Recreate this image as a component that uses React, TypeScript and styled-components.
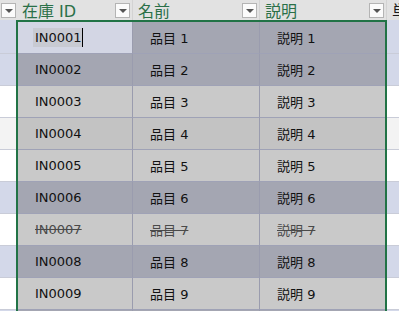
import styled, { createGlobalStyle, css } from "styled-components";

const GlobalStyle = createGlobalStyle`
  html, body {
    margin: 0;
    padding: 0;
    background: #ffffff;
    overflow: hidden;
  }
  body {
    font-family: "DejaVu Sans", "Noto Sans CJK JP", sans-serif;
  }
`;

const Sheet = styled.div`
  width: 420px;
  display: flex;
  flex-direction: column;
`;

const HeaderRow = styled.div`
  display: grid;
  grid-template-columns: 17px 116px 127px 127px 1fr;
  height: 20px;
  background: #e2e2e2;
`;

const HeaderCell = styled.div<{ $selected?: boolean }>`
  box-sizing: border-box;
  display: flex;
  align-items: center;
  justify-content: space-between;
  padding: 0 2px 0 5px;
  border-right: 1px solid #d3d3d3;
  font-size: 16px;
  color: ${(p) => (p.$selected ? "#2a7048" : "#1a1a1a")};
  white-space: nowrap;
  overflow: hidden;
`;

const GutterHead = styled(HeaderCell)`
  justify-content: flex-end;
  padding: 0 1px 0 0;
  border-right: none;
`;

const Dropdown = styled.span`
  box-sizing: border-box;
  flex: none;
  width: 15px;
  height: 15px;
  background: #fbfbfb;
  border: 1px solid #b4b4b4;
  display: flex;
  align-items: center;
  justify-content: center;
  &::after {
    content: "";
    border-left: 4px solid transparent;
    border-right: 4px solid transparent;
    border-top: 4px solid #555;
    margin-top: 1px;
  }
`;

const Body = styled.div`
  display: flex;
`;

const Gutter = styled.div<{ $width: number }>`
  width: ${(p) => p.$width}px;
  flex: none;
  display: flex;
  flex-direction: column;
`;

const GutterCell = styled.div<{ $band: boolean; $first?: boolean; $hover?: boolean }>`
  box-sizing: border-box;
  height: ${(p) => (p.$first ? 34 : 32)}px;
  border-bottom: 1px solid #c9ccd8;
  background: ${(p) => (p.$band ? "#d3d8e9" : p.$hover ? "#f3f3f3" : "#ffffff")};
`;

const Selection = styled.div`
  flex: none;
  border: 2px solid #217346;
  border-bottom: none;
  display: flex;
  flex-direction: column;
`;

const Row = styled.div`
  display: grid;
  grid-template-columns: 115px 127px 125px;
  height: 32px;
`;

const Cell = styled.div<{ $band: boolean; $hover?: boolean; $active?: boolean; $strike?: boolean }>`
  box-sizing: border-box;
  display: flex;
  align-items: center;
  padding-left: 17px;
  font-size: 13px;
  border-bottom: 1px solid #9fa2b6;
  border-right: 1px solid #9a9cae;
  &:last-child {
    border-right: none;
  }
  background: ${(p) =>
    p.$active ? "#d3d6e4" : p.$band ? "#a4a6b2" : p.$hover ? "#c3c3c3" : "#c9c9c9"};
  color: #111;
  ${(p) =>
    p.$strike &&
    css`
      color: #4a4a4a;
      text-decoration: line-through;
    `}
`;

const EditText = styled.span`
  background: #c8cad2;
  padding: 2px 0 2px 2px;
  margin-left: -2px;
  border-right: 1px solid #000;
`;

type Item = { n: number; band: boolean; hover?: boolean; strike?: boolean; hidden?: boolean };

const items: Item[] = [
  { n: 1, band: true },
  { n: 2, band: true },
  { n: 3, band: false },
  { n: 4, band: false, hover: true },
  { n: 5, band: false },
  { n: 6, band: true },
  { n: 7, band: false, strike: true },
  { n: 8, band: true },
  { n: 9, band: false },
  { n: 10, band: true, hidden: true },
];

export default function App() {
  return (
    <Sheet>
      <GlobalStyle />
      <HeaderRow>
        <GutterHead>
          <Dropdown />
        </GutterHead>
        <HeaderCell $selected>
          在庫 ID
          <Dropdown />
        </HeaderCell>
        <HeaderCell $selected>
          名前
          <Dropdown />
        </HeaderCell>
        <HeaderCell $selected>
          説明
          <Dropdown />
        </HeaderCell>
        <HeaderCell>単価</HeaderCell>
      </HeaderRow>
      <Body>
        <Gutter $width={16}>
          {items.map((it, i) => (
            <GutterCell key={it.n} $band={it.band} $hover={it.hover} $first={i === 0} />
          ))}
        </Gutter>
        <Selection>
          {items.map((it, i) => {
            const id = `IN${String(it.n).padStart(4, "0")}`;
            // the last row only peeks in at the bottom edge, its text is off screen
            const show = !it.hidden;
            return (
              <Row key={it.n}>
                <Cell $band={it.band} $hover={it.hover} $strike={it.strike} $active={i === 0}>
                  {i === 0 ? <EditText>{id}</EditText> : show && id}
                </Cell>
                <Cell $band={it.band} $hover={it.hover} $strike={it.strike}>
                  {show && `品目 ${it.n}`}
                </Cell>
                <Cell $band={it.band} $hover={it.hover} $strike={it.strike}>
                  {show && `説明 ${it.n}`}
                </Cell>
              </Row>
            );
          })}
        </Selection>
        <Gutter $width={40}>
          {items.map((it, i) => (
            <GutterCell key={it.n} $band={it.band} $hover={it.hover} $first={i === 0} />
          ))}
        </Gutter>
      </Body>
    </Sheet>
  );
}
